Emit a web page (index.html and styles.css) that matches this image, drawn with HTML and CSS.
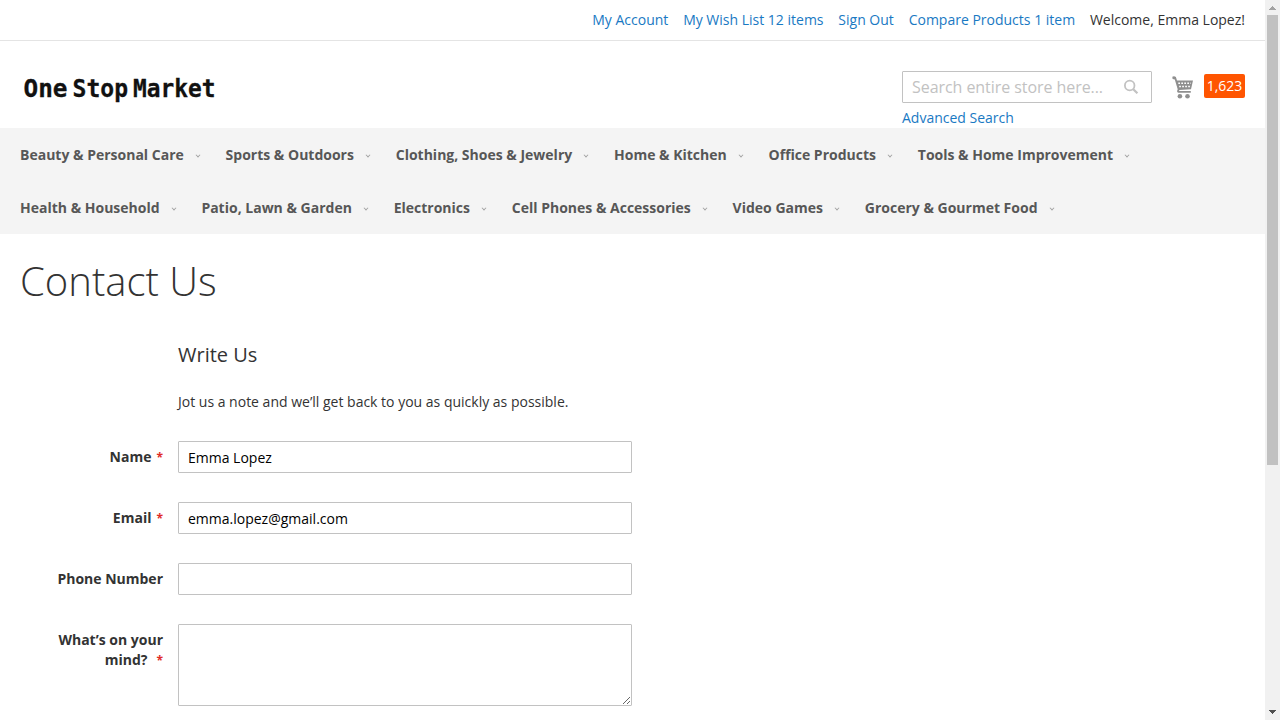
FILE: index.html
```html
<!DOCTYPE html>
<html lang="en">
<head>
<meta charset="utf-8">
<title>Contact Us</title>
<link rel="stylesheet" href="styles.css">
</head>
<body>
<div class="viewport">
  <div class="page">
    <div class="panel">
      <a>My Account</a><a>My Wish List 12 items</a><a>Sign Out</a><a>Compare Products 1 item</a><span>Welcome, Emma Lopez!</span>
    </div>
    <header class="header">
      <svg class="logo" width="200" height="34" viewBox="20 70 200 34" role="img" aria-label="One Stop Market">
        <text x="23.5" y="96.5" textLength="44" lengthAdjust="spacingAndGlyphs">One</text>
        <text x="72.5" y="96.5" textLength="55.5" lengthAdjust="spacingAndGlyphs">Stop</text>
        <text x="133" y="96.5" textLength="82.5" lengthAdjust="spacingAndGlyphs">Market</text>
      </svg>
      <div class="search">
        <div class="search-box">
          <input class="search-input" type="text" placeholder="Search entire store here...">
          <svg class="search-icon" width="16" height="16" viewBox="0 0 16 16"><circle cx="6.7" cy="6.5" r="4.8" fill="none" stroke="#c2c2c2" stroke-width="1.8"/><path d="M10 10L14.4 14.3" stroke="#c2c2c2" stroke-width="2.3"/></svg>
        </div>
        <a>Advanced Search</a>
      </div>
      <div class="cart">
        <svg class="cart-icon" width="22" height="23" viewBox="0 0 22 23"><path d="M0.3 0.8Q2.2-.2 3.9 1.1L5 4.4H21L19 13.3L7.2 14V15H18.8V16.8H6.4Q5 16.5 5.1 15L5.7 13.3L2.8 3.4L.6 2.9Z" fill="#8f8f8f"/><path d="M6.3 7.2H18.8M7.2 10.4H18" stroke="#fff" stroke-width="1.5" stroke-dasharray="1.7 1.3"/><circle cx="7.9" cy="20.3" r="2.3" fill="#8f8f8f"/><circle cx="15.5" cy="20.3" r="2.3" fill="#8f8f8f"/></svg>
        <span class="count">1,623</span>
      </div>
    </header>
    <nav class="nav">
      <a>Beauty &amp; Personal Care</a><a>Sports &amp; Outdoors</a><a>Clothing, Shoes &amp; Jewelry</a><a>Home &amp; Kitchen</a><a>Office Products</a><a>Tools &amp; Home Improvement</a><a>Health &amp; Household</a><a>Patio, Lawn &amp; Garden</a><a>Electronics</a><a>Cell Phones &amp; Accessories</a><a>Video Games</a><a>Grocery &amp; Gourmet Food</a>
    </nav>
    <main class="main">
      <h1>Contact Us</h1>
      <form class="form">
        <h2>Write Us</h2>
        <p>Jot us a note and we’ll get back to you as quickly as possible.</p>
        <div class="field"><label class="required">Name</label><input type="text" value="Emma Lopez"></div>
        <div class="field"><label class="required">Email</label><input type="text" value="emma.lopez@gmail.com"></div>
        <div class="field"><label>Phone Number</label><input type="text"></div>
        <div class="field"><label class="required wide">What’s on your mind?</label><textarea></textarea></div>
      </form>
    </main>
  </div>
  <div class="scrollbar">
    <svg width="15" height="15" shape-rendering="crispEdges"><path d="M7 6h1v1h1v1h1v1h1v1H4V9h1V8h1V7h1z" fill="#a3a3a3"/></svg>
    <div class="thumb"></div>
    <svg class="down" width="15" height="15" shape-rendering="crispEdges"><path d="M4 5h7v1h-1v1H9v1H8v1H7V8H6V7H5V6H4z" fill="#505050"/></svg>
  </div>
</div>
</body>
</html>
```
FILE: styles.css
```css
* { box-sizing: border-box; }
body {
  margin: 0;
  background: #fff;
  color: #333;
  font: 14px/20px "Open Sans", sans-serif;
  overflow: hidden;
}
a { color: #006bb4; }
.viewport { display: flex; width: 1280px; height: 720px; overflow: hidden; }
.page { width: 1265px; }
.panel {
  display: flex;
  justify-content: flex-end;
  gap: 14.8px;
  height: 41px;
  padding: 10px 20px 0;
  border-bottom: 1px solid #e4e4e4;
}
.panel a, .search a { color: #1979c3; }
.header { display: flex; height: 87px; padding: 30px 20px 0; }
.logo { margin-top: -1px; overflow: visible; }
.logo text { font: bold 24px "DejaVu Sans Mono", monospace; fill: #111; stroke: #111; stroke-width: .3px; }
.search { width: 250px; margin-left: auto; }
.search-box {
  display: flex;
  align-items: center;
  height: 32px;
  padding: 0 12px 0 9px;
  margin-bottom: 5px;
  border: 1px solid #c2c2c2;
  border-radius: 1px;
}
.search-input { flex: 1; min-width: 0; border: 0; padding: 0; outline: 0; font: 16px "Open Sans", sans-serif; letter-spacing: -.06px; }
.search-input::placeholder { color: #c2c2c2; }
.cart { display: flex; margin-left: 20px; }
.cart-icon { margin-top: 5px; }
.count {
  width: 41px;
  height: 24px;
  margin: 3px 0 0 10px;
  border-radius: 2px;
  background: #ff5501;
  color: #fff;
  line-height: 24px;
  text-align: center;
}
.nav {
  display: flex;
  flex-wrap: wrap;
  height: 106px;
  padding: 0 100px 0 20px;
  background: #f4f4f4;
}
.nav a {
  display: flex;
  align-items: center;
  height: 53px;
  margin-right: 23.8px;
  color: #575757;
  font-weight: 700;
}
.nav a::after {
  content: "";
  width: 3px;
  height: 3px;
  margin: 0 2px 0 12px;
  border: solid #a0a0a0;
  border-width: 0 1px 1px 0;
  transform: rotate(45deg) scale(.85);
}
.main { padding: 0 20px; }
h1 { margin: 0; padding-top: 25px; font-size: 40px; line-height: 44px; font-weight: 300; }
.form { width: 612px; padding-top: 40px; }
h2 { margin: 0 0 25px 158px; font-size: 20px; line-height: 24px; font-weight: 400; }
p { margin: 0 0 29px 158px; }
.field { display: flex; margin-bottom: 29px; }
.field label { width: 158px; padding: 6px 15px 0 0; font-weight: 700; text-align: right; }
.required::after { content: "*"; margin-left: 5px; color: #e02b27; font-size: 12px; }
.wide { padding-left: 30px !important; }
.wide::after { margin-left: 9px; }
.field input, .field textarea {
  width: 454px;
  height: 32px;
  margin: 0;
  padding: 1px 9px 0;
  border: 1px solid #c2c2c2;
  border-radius: 1px;
  outline: 0;
  color: #000;
  font: 14px/20px "Open Sans", sans-serif;
}
.field textarea { height: 82px; }
.scrollbar { display: flex; flex-direction: column; width: 15px; background: #f1f1f1; }
.thumb { width: 11px; height: 450px; margin-left: 2px; background: #c1c1c1; }
.down { margin-top: auto; }
```
